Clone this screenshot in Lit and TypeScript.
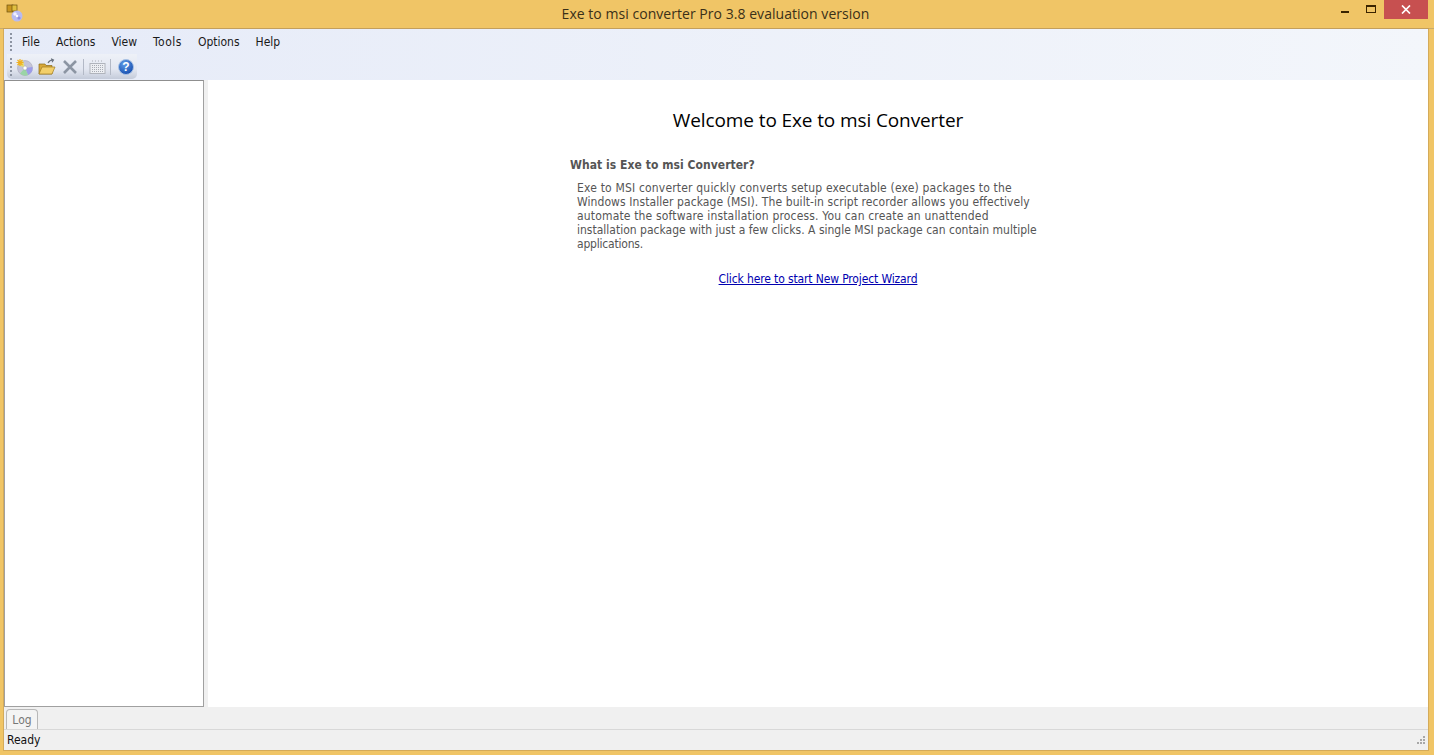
import { LitElement, html, css, svg } from "lit";
import { customElement } from "lit/decorators.js";

const dots = html`<svg class="grip" width="3" height="20" viewBox="0 0 3 20"><g fill="#8d94a3">${[1, 5, 9, 13, 17].map((y) => svg`<rect x="0" y="${y}" width="2" height="2"/>`)}</g></svg>`;

@customElement("app-root")
export class AppRoot extends LitElement {
  static styles = css`
    :host { display: flex; flex-direction: column; width: 1434px; height: 755px; overflow: hidden; background: #f0c566; font-family: "DejaVu Sans", sans-serif; font-stretch: condensed; }
    .titlebar { height: 28px; flex: none; display: grid; grid-template-columns: 1fr auto 1fr; border-bottom: 1px solid #c9ab6b; box-sizing: content-box; }
    .app-icon { margin: 4px 0 0 6px; }
    .title { font: 14px/28px "Open Sans", sans-serif; letter-spacing: .04px; color: #3a3018; padding-right: 3px; }
    .winbtns { display: flex; justify-content: flex-end; align-items: flex-start; padding-right: 6px; }
    .winbtn { display: flex; justify-content: center; }
    .min { width: 26px; height: 19px; padding-top: 11px; box-sizing: border-box; }
    .max { width: 26px; height: 19px; padding-top: 5px; box-sizing: border-box; }
    .close { width: 44px; height: 19px; background: #c75050; align-items: center; }
    .window { flex: 1; min-height: 0; margin: 0 6px 5px 4px; display: flex; flex-direction: column; background: #f0f0f0; box-shadow: 0 0 0 1px rgba(190, 150, 80, .55); }
    .bars { background: linear-gradient(90deg, #e6ebf8, #f3f6fb); height: 51px; flex: none; display: flex; flex-direction: column; }
    .menubar { height: 24px; display: flex; align-items: center; padding: 1px 0 0 6px; box-sizing: border-box; }
    .menuitems { display: flex; gap: 16px; margin-left: 9px; font-size: 12px; color: #1a1a1a; }
    .wide { letter-spacing: .5px; }
    .grip { flex: none; }
    .toolbar { width: 130px; height: 25px; margin: 1px 0 0 3px; background: linear-gradient(180deg, #eef1f8 0%, #e3e7f1 60%, #c4cbda 100%); border-radius: 0 0 5px 5px; display: flex; align-items: center; padding-left: 3px; box-sizing: border-box; }
    .tool { display: flex; flex: none; margin-right: 5px; }
    .tool.first { margin-left: 2px; }
    .tool.help { margin-left: 2px; margin-right: 0; }
    .sep { flex: none; width: 1px; height: 16px; background: #b3b9c6; margin: 0 4px 0 -1px; }
    .middle { flex: 1; min-height: 0; display: flex; background: #fff; }
    .tree { width: 200px; box-sizing: border-box; border: 1px solid #a0a0a0; border-top-color: #8f8f8f; background: #fff; flex: none; }
    .splitter { width: 4px; background: #f0f0f0; flex: none; }
    .main { flex: 1; display: flex; justify-content: center; background: #fff; }
    .content { width: 496px; padding-top: 26px; color: #555; font-size: 12px; line-height: 14px; }
    h1 { margin: 0; text-align: center; font: 400 19px/29px "Open Sans", sans-serif; letter-spacing: -.11px; color: #000; }
    h2 { margin: 21px 0 0; font-size: 12px; font-weight: 700; line-height: 18px; letter-spacing: .05px; color: #555; }
    p { margin: 7px 0 0 7px; white-space: nowrap; }
    p span { display: block; }
    .l1 { letter-spacing: .18px; }
    .l2 { letter-spacing: .08px; }
    .l3 { letter-spacing: .165px; }
    .l4 { letter-spacing: .005px; }
    .l5 { letter-spacing: -.2px; }
    .linkrow { text-align: center; margin-top: 21px; }
    a { color: #0000b0; text-decoration: underline; letter-spacing: -.13px; }
    .tabs { height: 22px; flex: none; display: flex; align-items: flex-end; border-bottom: 1px solid #d8d8d8; box-sizing: content-box; padding-left: 2px; background: #f0f0f0; }
    .tab { width: 32px; height: 20px; box-sizing: border-box; border: 1px solid #b8b8b8; border-bottom: none; border-radius: 4px 4px 0 0; text-align: center; font-size: 12px; line-height: 20px; color: #777; background: #f4f4f4; }
    .status { height: 20px; flex: none; display: flex; align-items: center; justify-content: space-between; padding: 0 2px 0 3px; font-size: 12px; color: #111; background: #f0f0f0; }
  `;

  render() {
    return html`
      <div class="titlebar">
        <svg class="app-icon" width="18" height="18" viewBox="0 0 18 18">
          <rect x="1" y="1" width="6" height="7" fill="#c8951f" stroke="#6e5210" stroke-width=".7"/>
          <rect x="6" y="1" width="5" height="6" fill="#e0c040" stroke="#6e5210" stroke-width=".7"/>
          <circle cx="11" cy="12" r="5.500" fill="#b8bbf0"/>
          <circle cx="9" cy="10" r="1.800" fill="#eef"/>
          <circle cx="13" cy="14" r="1.600" fill="#8f90e0"/>
          <circle cx="11" cy="12" r="1.200" fill="#fff"/>
        </svg>
        <div class="title">Exe to msi converter Pro 3.8 evaluation version</div>
        <div class="winbtns">
          <div class="winbtn min"><svg width="8" height="3" viewBox="0 0 8 3"><rect width="8" height="2" fill="#3a2400"/></svg></div>
          <div class="winbtn max"><svg width="10" height="8" viewBox="0 0 10 8"><rect x=".5" y=".5" width="9" height="7" fill="none" stroke="#3a2400"/><rect x="0" y="0" width="10" height="2" fill="#3a2400"/></svg></div>
          <div class="winbtn close"><svg width="10" height="9" viewBox="0 0 10 9"><path d="M1 .5 9 8.500M9 .5 1 8.500" stroke="#fff" stroke-width="1.700"/></svg></div>
        </div>
      </div>
      <div class="window">
        <div class="bars">
          <div class="menubar">
            ${dots}
            <div class="menuitems">
              <span>File</span><span>Actions</span><span>View</span><span class="wide">Tools</span><span>Options</span><span>Help</span>
            </div>
          </div>
          <div class="toolbar">
            ${dots}
            <span class="tool first">
              <svg width="18" height="18" viewBox="0 0 18 18">
                <circle cx="10" cy="10" r="7.500" fill="#c4c4d8" stroke="#a0a0b0" stroke-width=".5"/>
                <path d="M10 10 3 7A7.500 7.500 0 0 1 8 2.700Z" fill="#e4dc78"/>
                <path d="M10 10 17.400 9A7.500 7.500 0 0 1 13 17Z" fill="#9c9ce8"/>
                <path d="M10 10 13 17A7.500 7.500 0 0 1 5 15.600Z" fill="#9ad4a6"/>
                <circle cx="10" cy="10" r="2" fill="#fff" stroke="#999" stroke-width=".4"/>
                <path d="M5 1v7M1.500 4.500h7M2.500 2l5 5M7.500 2l-5 5" stroke="#f0b020" stroke-width="1.200"/>
              </svg>
            </span>
            <span class="tool">
              <svg width="18" height="18" viewBox="0 0 18 18">
                <path d="M1 6h6l1 1.500h6V16H1Z" fill="#d8a838" stroke="#8a6a18" stroke-width=".7"/>
                <path d="M1 16 4 9h13l-3 7Z" fill="#f3cf6a" stroke="#a07c20" stroke-width=".7"/>
                <path d="M10 5c1-2 3-3 5-3M13 .8 15.500 2 14 4.200" fill="none" stroke="#68707c" stroke-width="1.100"/>
              </svg>
            </span>
            <span class="tool">
              <svg width="18" height="18" viewBox="0 0 18 18"><path d="M3 3 15 15M15 3 3 15" stroke="#8c95a3" stroke-width="2.600"/></svg>
            </span>
            <span class="sep"></span>
            <span class="tool">
              <svg width="18" height="18" viewBox="0 0 18 18">
                <rect x="2" y="5.500" width="15" height="10" fill="#eceef2" stroke="#b0b4bc"/>
                <path d="M4 3h1M7 3h1M10 3h1M13 3h1M4 7.500h11M4 9.500h11M4 11.500h11M4 13.500h11" stroke="#a8acb4" stroke-dasharray="1 1"/>
              </svg>
            </span>
            <span class="sep"></span>
            <span class="tool help">
              <svg width="18" height="18" viewBox="0 0 18 18">
                <defs><radialGradient id="hg" cx=".4" cy=".3" r=".8"><stop offset="0" stop-color="#5f9ce8"/><stop offset="1" stop-color="#0f45a8"/></radialGradient></defs>
                <circle cx="9" cy="9" r="7.500" fill="url(#hg)" stroke="#a9c2e4"/>
                <text x="9" y="13" text-anchor="middle" font-family="Liberation Sans" font-weight="700" font-size="12" fill="#fff">?</text>
              </svg>
            </span>
          </div>
        </div>
        <div class="middle">
          <div class="tree"></div>
          <div class="splitter"></div>
          <div class="main">
            <div class="content">
              <h1>Welcome to Exe to msi Converter</h1>
              <h2>What is Exe to msi Converter?</h2>
              <p>
                <span class="l1">Exe to MSI converter quickly converts setup executable (exe) packages to the</span>
                <span class="l2">Windows Installer package (MSI). The built-in script recorder allows you effectively</span>
                <span class="l3">automate the software installation process. You can create an unattended</span>
                <span class="l4">installation package with just a few clicks. A single MSI package can contain multiple</span>
                <span class="l5">applications.</span>
              </p>
              <div class="linkrow"><a href="#">Click here to start New Project Wizard</a></div>
            </div>
          </div>
        </div>
        <div class="tabs"><div class="tab">Log</div></div>
        <div class="status">
          <span>Ready</span>
          <svg width="10" height="10" viewBox="0 0 10 10"><g fill="#a8a8a8"><rect x="7" y="1" width="2" height="2"/><rect x="4" y="4" width="2" height="2"/><rect x="7" y="4" width="2" height="2"/><rect x="1" y="7" width="2" height="2"/><rect x="4" y="7" width="2" height="2"/><rect x="7" y="7" width="2" height="2"/></g></svg>
        </div>
      </div>
    `;
  }
}
